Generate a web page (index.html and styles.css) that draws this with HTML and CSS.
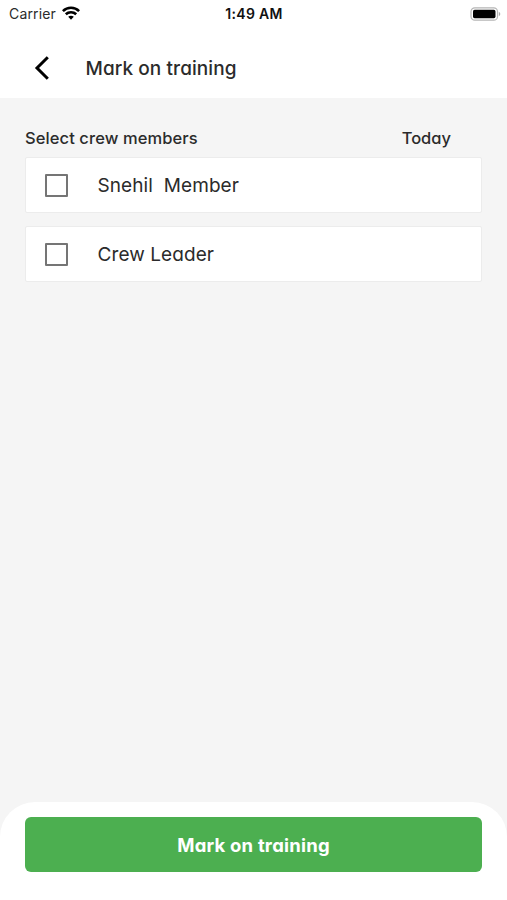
FILE: index.html
```
<!DOCTYPE html>
<html lang="en">
<head>
<meta charset="utf-8">
<meta name="viewport" content="width=device-width, initial-scale=1">
<title>Mark on training</title>
<link rel="stylesheet" href="styles.css">
</head>
<body>
<div class="screen">
  <div class="status">
    <div class="carrier">
      <span>Carrier</span>
      <svg class="wifi" width="18" height="14" viewBox="0 0 18 14" fill="none" stroke="#000" stroke-width="2.6">
        <path d="M.9 5.1C5.4.6 12.6.6 17.1 5.1"/>
        <path d="M3.8 8.3c2.9-2.8 7.5-2.8 10.4 0"/>
        <path d="M6.2 10.8c1.6-1.5 4-1.5 5.6 0L9 13.7z" fill="#000" stroke="none"/>
      </svg>
    </div>
    <time class="clock">1:49 AM</time>
    <svg class="battery" width="31" height="14" viewBox="0 0 31 14">
      <rect x="1" y=".8" width="26.5" height="12.4" rx="3.8" fill="#fff" stroke="#b5b5b5" stroke-width="1.2"/>
      <rect x="3" y="2.8" width="22.5" height="8.4" rx="1.6" fill="#000"/>
      <path d="M28.8 4.8c2 .8 2 3.6 0 4.4z" fill="#aaa"/>
    </svg>
  </div>
  <header class="header">
    <svg class="back" width="18" height="26" viewBox="0 0 18 26" fill="none" stroke="#000" stroke-width="3">
      <path d="M14.8 2.2 4 13l10.8 10.8"/>
    </svg>
    <h1 class="title">Mark on training</h1>
  </header>
  <main class="content">
    <div class="labels"><span class="select">Select crew members</span><span class="today">Today</span></div>
    <label class="card"><input class="check" type="checkbox"><span class="member">Snehil&nbsp; Member</span></label>
    <label class="card"><input class="check" type="checkbox"><span class="leader">Crew Leader</span></label>
  </main>
  <footer class="footer"><button class="button" type="button">Mark on training</button></footer>
</div>
</body>
</html>
```
FILE: styles.css
```
* { box-sizing: border-box; }
body { margin: 0; background: #f5f5f5; color: #2b2b2b; font-family: Inter, "Liberation Sans", sans-serif; font-feature-settings: "cv11"; }
.screen { height: 900px; display: flex; flex-direction: column; }
.status { height: 28px; flex: none; padding: 0 6px 0 9px; display: grid; grid-template-columns: 1fr auto 1fr; align-items: center; background: #fff; font-feature-settings: normal; }
.carrier { display: flex; align-items: center; gap: 6px; font-size: 14px; line-height: 28px; letter-spacing: .15px; }
.wifi { margin-bottom: 2px; }
.clock { margin: 0 2px 2px 0; font-size: 14px; font-weight: 600; letter-spacing: .3px; color: #111; }
.battery { justify-self: end; margin-bottom: 1px; }
.header { height: 70px; flex: none; display: flex; align-items: center; padding: 11px 0 0 33px; background: #fff; }
.back { margin-bottom: 1px; }
.title { margin: 0 0 0 34.5px; font-size: 19px; font-weight: 500; line-height: 28px; letter-spacing: .08px; }
.content { flex: 1; padding: 26px 25px 0; display: flex; flex-direction: column; gap: 13px; }
.labels { display: flex; justify-content: space-between; padding-right: 31px; margin-bottom: -8px; font-size: 16.5px; font-weight: 500; line-height: 28px; }
.select { letter-spacing: .09px; }
.card { height: 56px; display: flex; align-items: center; padding: 1px 0 0 19px; background: #fff; border: 1px solid #ececec; border-radius: 2px; font-size: 19px; letter-spacing: .08px; }
.check { appearance: none; width: 23px; height: 23px; margin: 0 30px 1px -.5px; border: 2px solid #757575; border-radius: 1px; background: #fff; }
.footer { height: 98px; flex: none; padding: 15px 25px 0; background: #fff; border-radius: 35px 35px 0 0; }
.button { display: block; width: 100%; height: 55px; padding: 1px 0 0; border: 0; border-radius: 6px; background: #4caf50; color: #fff; font: 700 18.5px/54px Inter, "Liberation Sans", sans-serif; font-feature-settings: "cv11"; letter-spacing: .2px; }
```
